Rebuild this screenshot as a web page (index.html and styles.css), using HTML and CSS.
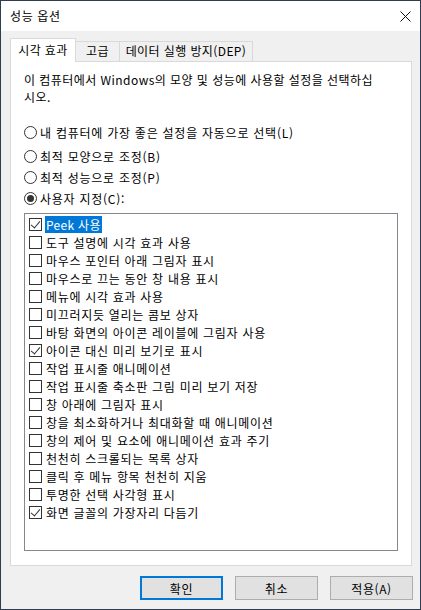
FILE: index.html
```html
<!DOCTYPE html>
<html lang="ko">
<head>
<meta charset="utf-8">
<link rel="stylesheet" href="styles.css">
</head>
<body>
<div class="window">
  <div class="titlebar">
    <span class="title">성능 옵션</span>
    <svg class="close" width="11" height="11" viewBox="0 0 11 11"><path d="M0.5 0.5L10.5 10.5M10.5 0.5L0.5 10.5" stroke="#111" stroke-width="1" fill="none"/></svg>
  </div>
  <div class="tabs">
    <div class="tab active t1">시각 효과</div>
    <div class="tab t2">고급</div>
    <div class="tab t3">데이터 실행 방지(DEP)</div>
  </div>
  <div class="panel">
    <p class="desc">이 컴퓨터에서 Windows의 모양 및 성능에 사용할 설정을 선택하십<br>시오.</p>
    <div class="radios">
      <div class="radio first"><span class="rb"></span><span>내 컴퓨터에 가장 좋은 설정을 자동으로 선택(L)</span></div>
      <div class="radio"><span class="rb"></span><span>최적 모양으로 조정(B)</span></div>
      <div class="radio"><span class="rb"></span><span>최적 성능으로 조정(P)</span></div>
      <div class="radio"><span class="rb on"></span><span>사용자 지정(C):</span></div>
    </div>
    <div class="list">
      <div class="row"><span class="cb on"></span><span class="lbl sel">Peek 사용</span></div>
      <div class="row"><span class="cb"></span><span class="lbl">도구 설명에 시각 효과 사용</span></div>
      <div class="row"><span class="cb"></span><span class="lbl">마우스 포인터 아래 그림자 표시</span></div>
      <div class="row"><span class="cb"></span><span class="lbl">마우스로 끄는 동안 창 내용 표시</span></div>
      <div class="row"><span class="cb"></span><span class="lbl">메뉴에 시각 효과 사용</span></div>
      <div class="row"><span class="cb"></span><span class="lbl">미끄러지듯 열리는 콤보 상자</span></div>
      <div class="row"><span class="cb"></span><span class="lbl">바탕 화면의 아이콘 레이블에 그림자 사용</span></div>
      <div class="row"><span class="cb on"></span><span class="lbl">아이콘 대신 미리 보기로 표시</span></div>
      <div class="row"><span class="cb"></span><span class="lbl">작업 표시줄 애니메이션</span></div>
      <div class="row"><span class="cb"></span><span class="lbl">작업 표시줄 축소판 그림 미리 보기 저장</span></div>
      <div class="row"><span class="cb"></span><span class="lbl">창 아래에 그림자 표시</span></div>
      <div class="row"><span class="cb"></span><span class="lbl">창을 최소화하거나 최대화할 때 애니메이션</span></div>
      <div class="row"><span class="cb"></span><span class="lbl">창의 제어 및 요소에 애니메이션 효과 주기</span></div>
      <div class="row"><span class="cb"></span><span class="lbl">천천히 스크롤되는 목록 상자</span></div>
      <div class="row"><span class="cb"></span><span class="lbl">클릭 후 메뉴 항목 천천히 지움</span></div>
      <div class="row"><span class="cb"></span><span class="lbl">투명한 선택 사각형 표시</span></div>
      <div class="row"><span class="cb on"></span><span class="lbl">화면 글꼴의 가장자리 다듬기</span></div>
    </div>
  </div>
  <div class="buttons">
    <button class="btn default">확인</button>
    <button class="btn">취소</button>
    <button class="btn">적용(A)</button>
  </div>
</div>
</body>
</html>
```

FILE: styles.css
```css
* { box-sizing: border-box; }
html, body { margin: 0; padding: 0; }
body {
  font-family: "Noto Sans CJK KR", "Noto Sans", sans-serif;
  font-size: 12px;
  letter-spacing: 0.6px;
  color: #000;
  background: #f0f0f0;
}
.window {
  width: 421px;
  height: 610px;
  border: 1px solid #2e3d50;
  background: #f0f0f0;
  display: flex;
  flex-direction: column;
}
.titlebar {
  height: 30px;
  background: #fff;
  display: flex;
  align-items: center;
  justify-content: space-between;
  padding: 0 9px 0 9px;
  flex: none;
}
.title { font-size: 12px; line-height: 16px; }
.close { display: block; }
.tabs {
  display: flex;
  align-items: flex-end;
  margin-top: 7px;
  padding-left: 9px;
  height: 23px;
  flex: none;
}
.tab {
  height: 20px;
  border: 1px solid #d9d9d9;
  border-bottom: none;
  background: #f0f0f0;
  text-align: center;
  line-height: 18px;
  white-space: nowrap;
  letter-spacing: 0.4px;
}
.tab.active {
  height: 24px;
  margin-bottom: -1px;
  background: #fff;
  position: relative;
  z-index: 1;
  line-height: 22px;
}
.t1 { width: 66px; }
.t2 { width: 45px; margin-left: -1px; }
.t3 { width: 134px; margin-left: -1px; }
.panel {
  margin-left: 9px;
  width: 402px;
  height: 505px;
  border: 1px solid #d9d9d9;
  background: #fff;
  padding: 9px 0 0 13px;
  flex: none;
}
.desc {
  margin: 0;
  line-height: 17px;
  white-space: nowrap;
  letter-spacing: 0.45px;
}
.radios { margin-top: 17px; }
.radio {
  height: 21px;
  display: flex;
  align-items: center;
  white-space: nowrap;
  letter-spacing: 0.75px;
}
.radio.first { margin-bottom: 3px; }
.rb {
  width: 13px;
  height: 13px;
  border: 1px solid #333;
  border-radius: 50%;
  margin-right: 3px;
  flex: none;
  display: flex;
  align-items: center;
  justify-content: center;
  background: #fff;
}
.rb.on::after {
  content: "";
  width: 7px;
  height: 7px;
  border-radius: 50%;
  background: #333;
}
.list {
  margin-top: 4px;
  width: 374px;
  height: 338px;
  border: 1px solid #828790;
  background: #fff;
  padding: 1px 0 0 4px;
  letter-spacing: 0.7px;
}
.row {
  height: 18px;
  display: flex;
  align-items: center;
  white-space: nowrap;
}
.cb {
  width: 13px;
  height: 13px;
  border: 1px solid #333;
  background: #fff;
  flex: none;
  margin-right: 3px;
  position: relative;
}
.cb.on::after {
  content: "";
  position: absolute;
  left: 3px;
  top: 0px;
  width: 4px;
  height: 8px;
  border-right: 1px solid #333;
  border-bottom: 1px solid #333;
  transform: rotate(40deg);
  transform-origin: center;
}
.lbl {
  height: 17px;
  line-height: 17px;
  padding: 0 1px;
}
.lbl.sel {
  background: #0078d7;
  color: #fff;
  letter-spacing: 0.3px;
}
.buttons {
  display: flex;
  justify-content: flex-end;
  gap: 12px;
  padding-right: 7px;
  margin-top: 10px;
}
.btn {
  width: 83px;
  height: 24px;
  background: #e1e1e1;
  border: 1px solid #adadad;
  font-family: "Noto Sans CJK KR", "Noto Sans", sans-serif;
  font-size: 12px;
  letter-spacing: 0.6px;
  color: #000;
  padding: 0;
  margin: 0;
}
.btn.default {
  border: 2px solid #0078d7;
}
```
